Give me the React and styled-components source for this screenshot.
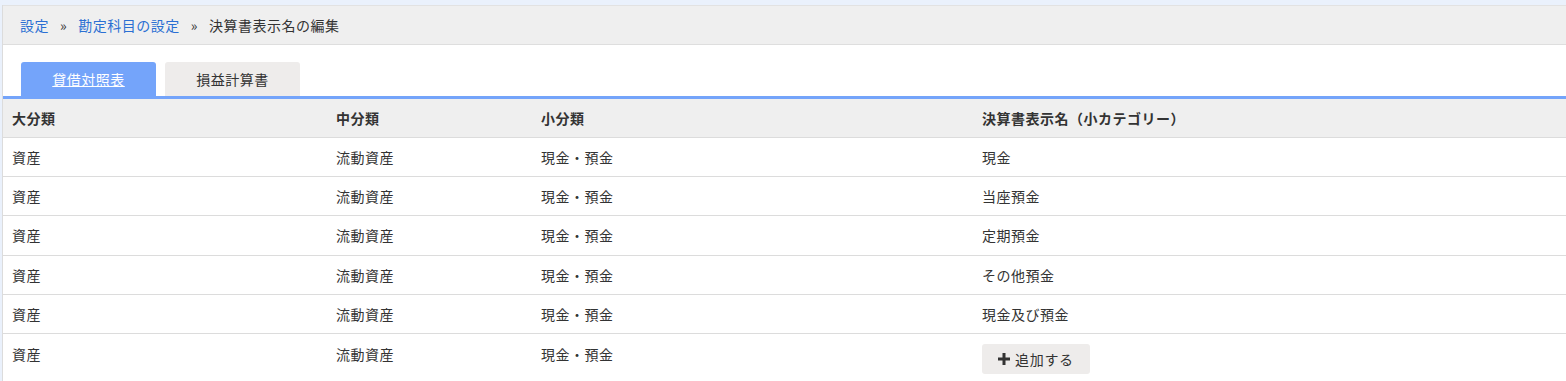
import React from 'react'
import styled, { createGlobalStyle } from 'styled-components'

const GlobalStyle = createGlobalStyle`
  body {
    margin: 0;
    background: #eaf1fc;
    font-family: "Noto Sans CJK JP", "Noto Sans", sans-serif;
    font-size: 14px;
    letter-spacing: 0.5px;
    color: #333;
  }
`

const Page = styled.div`
  padding: 5px 0 0 2px;
`

const Panel = styled.div`
  background: #fff;
  border-left: 1px solid #dcdcdc;
  min-height: 376px;
`

const Breadcrumb = styled.div`
  height: 38px;
  display: flex;
  align-items: center;
  padding-left: 17px;
  background: #efefef;
  border-bottom: 1px solid #dedede;
  border-top: 1px solid #e2e2e2;
`

const Crumb = styled.a`
  color: #2b6fd3;
  text-decoration: none;
`

const Sep = styled.span`
  margin: 0 11px;
  color: #333;
`

const Tabs = styled.div`
  display: flex;
  gap: 9px;
  padding: 17px 0 0 18px;
  border-bottom: 3px solid #74a4fa;
`

const Tab = styled.a`
  width: 135px;
  height: 34px;
  display: flex;
  align-items: center;
  justify-content: center;
  border-radius: 3px 3px 0 0;
  background: ${p => (p.$active ? '#74a4fa' : '#eeeceb')};
  color: ${p => (p.$active ? '#fff' : '#333')};
  text-decoration: ${p => (p.$active ? 'underline' : 'none')};
`

const Table = styled.div`
  display: grid;
  grid-template-columns: 324px 205px 441px 1fr;
`

const Head = styled.div`
  height: 38px;
  display: flex;
  align-items: center;
  padding-left: 9px;
  background: #efefef;
  border-bottom: 1px solid #dcdcdc;
  font-weight: bold;
`

const Cell = styled.div`
  height: 38.2px;
  display: flex;
  align-items: center;
  padding-left: 9px;
  border-bottom: 1px solid #dcdcdc;
`

const LastCell = styled.div`
  display: flex;
  align-items: flex-start;
  padding: 10px 0 0 9px;
`

const AddButton = styled.button`
  height: 30px;
  padding: 0 16px 0 16px;
  display: flex;
  align-items: center;
  gap: 5px;
  border: none;
  border-radius: 3px;
  background: #eeeceb;
  color: #333;
  font-family: inherit;
  font-size: 14px;
  letter-spacing: 0.7px;
`

const heads = ['大分類', '中分類', '小分類', '決算書表示名（小カテゴリー）']
const names = ['現金', '当座預金', '定期預金', 'その他預金', '現金及び預金']

const PlusIcon = () => (
  <svg width="12" height="12" viewBox="0 0 12 12">
    <path d="M4.5 0h3v4.5H12v3H7.5V12h-3V7.5H0v-3h4.5z" fill="#333" />
  </svg>
)

export default function App() {
  return (
    <Page>
      <GlobalStyle />
      <Panel>
        <Breadcrumb>
          <Crumb href="#">設定</Crumb>
          <Sep>»</Sep>
          <Crumb href="#">勘定科目の設定</Crumb>
          <Sep>»</Sep>
          <span>決算書表示名の編集</span>
        </Breadcrumb>
        <Tabs>
          <Tab $active href="#">貸借対照表</Tab>
          <Tab href="#">損益計算書</Tab>
        </Tabs>
        <Table>
          {heads.map(h => <Head key={h}>{h}</Head>)}
          {names.map(n => (
            <React.Fragment key={n}>
              <Cell>資産</Cell>
              <Cell>流動資産</Cell>
              <Cell>現金・預金</Cell>
              <Cell>{n}</Cell>
            </React.Fragment>
          ))}
          <LastCell>資産</LastCell>
          <LastCell>流動資産</LastCell>
          <LastCell>現金・預金</LastCell>
          <LastCell>
            <AddButton><PlusIcon />追加する</AddButton>
          </LastCell>
        </Table>
      </Panel>
    </Page>
  )
}
